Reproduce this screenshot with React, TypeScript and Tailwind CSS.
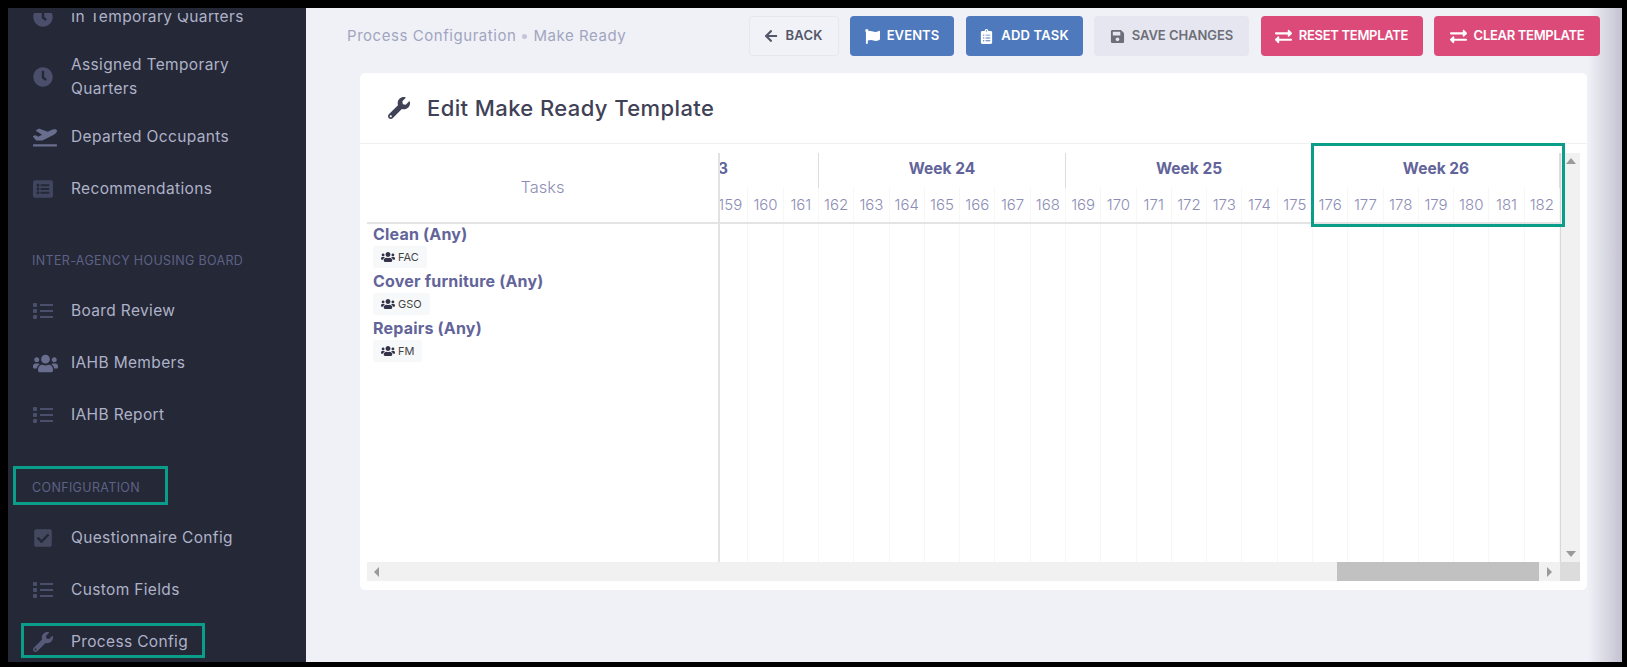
import type { ReactNode } from "react";
import {
  FaArrowLeft,
  FaCheckSquare,
  FaClipboardList,
  FaClock,
  FaExchangeAlt,
  FaFlag,
  FaListAlt,
  FaPlaneDeparture,
  FaSave,
  FaUsers,
  FaWrench,
} from "react-icons/fa";

function ListIcon() {
  return (
    <svg width="20" height="16" viewBox="0 0 20 16" fill="#4b4f6b">
      <rect x="0" y="0" width="4" height="4" rx="1" />
      <rect x="0" y="6" width="4" height="4" rx="1" />
      <rect x="0" y="12" width="4" height="4" rx="1" />
      <rect x="7" y="1" width="13" height="2" />
      <rect x="7" y="7" width="13" height="2" />
      <rect x="7" y="13" width="13" height="2" />
    </svg>
  );
}

function NavItem({ icon, label, tall }: { icon: ReactNode; label: string; tall?: boolean }) {
  return (
    <div className={tall ? "flex h-[68px] items-center pl-[25px]" : "flex h-[52px] items-center pl-[25px]"}>
      <span className="flex w-[38px] shrink-0 items-center text-[#4b4f6b]">{icon}</span>
      <span className="w-[190px] text-[15.5px] leading-[24px] tracking-[0.35px] text-[#aeb2c9]">{label}</span>
    </div>
  );
}

function SideHeading({ label, top }: { label: string; top: string }) {
  return (
    <div className={`${top} pb-[14px] pl-[24px] text-[12.5px] leading-[20px] tracking-[0.35px] text-[#5d6285]`}>
      {label}
    </div>
  );
}

function Sidebar() {
  return (
    <aside className="relative w-[298px] shrink-0 overflow-hidden bg-[#252836]">
      <div className="-mt-[17px]">
        <NavItem icon={<FaClock size={20} />} label="In Temporary Quarters" />
        <NavItem icon={<FaClock size={20} />} label="Assigned Temporary Quarters" tall />
        <NavItem icon={<FaPlaneDeparture size={24} className="text-[#6a6e8e]" />} label="Departed Occupants" />
        <NavItem icon={<FaListAlt size={20} className="text-[#414560]" />} label="Recommendations" />
        <SideHeading label="INTER-AGENCY HOUSING BOARD" top="pt-[36px]" />
        <NavItem icon={<ListIcon />} label="Board Review" />
        <NavItem icon={<FaUsers size={25} className="text-[#6a6e8e]" />} label="IAHB Members" />
        <NavItem icon={<ListIcon />} label="IAHB Report" />
        <SideHeading label="CONFIGURATION" top="pt-[37px]" />
        <NavItem icon={<FaCheckSquare size={20} className="text-[#454960]" />} label="Questionnaire Config" />
        <NavItem icon={<ListIcon />} label="Custom Fields" />
        <NavItem icon={<FaWrench size={20} className="text-[#565a78]" />} label="Process Config" />
      </div>
      {/* the sidebar header sits over the scrolled list */}
      <div className="absolute inset-x-0 top-0 h-[5px] bg-[#252836]" />
    </aside>
  );
}

function ActionButton({ icon, label, tone }: { icon: ReactNode; label: string; tone: string }) {
  return (
    <button className={`flex h-[40px] items-center justify-center gap-[7px] rounded-[4px] text-[13px] font-semibold ${tone}`}>
      {icon}
      {label}
    </button>
  );
}

const weeks = [
  { label: "Week 23", days: [155, 156, 157, 158, 159, 160, 161] },
  { label: "Week 24", days: [162, 163, 164, 165, 166, 167, 168] },
  { label: "Week 25", days: [169, 170, 171, 172, 173, 174, 175] },
  { label: "Week 26", days: [176, 177, 178, 179, 180, 181, 182] },
];

const tasks = [
  { name: "Clean (Any)", group: "FAC" },
  { name: "Cover furniture (Any)", group: "GSO" },
  { name: "Repairs (Any)", group: "FM" },
];

function Timeline() {
  return (
    <div className="flex h-full min-w-0 flex-1 justify-end overflow-hidden">
      {weeks.map((week) => (
        <div key={week.label} className="flex w-[247px] shrink-0 flex-col">
          <div className="flex h-[35px] items-center justify-center border-r border-[#dddddd] pb-[3px] text-[15.5px] font-bold text-[#62649a]">
            {week.label}
          </div>
          <div className="flex h-[36px] border-b-2 border-[#e4e4e4]">
            {week.days.map((day) => (
              <div
                key={day}
                className="flex flex-1 items-center justify-center border-r border-[#f7f7f7] text-[15px] font-light text-[#8c8db5]"
              >
                {day}
              </div>
            ))}
          </div>
          <div className="flex flex-1">
            {week.days.map((day) => (
              <div key={day} className="flex-1 border-r border-[#f7f7f8]" />
            ))}
          </div>
        </div>
      ))}
    </div>
  );
}

function TaskColumn() {
  return (
    <div className="flex h-full w-[353px] shrink-0 flex-col border-r-2 border-[#e2e2e2]">
      <div className="flex h-[71px] shrink-0 items-center justify-center border-b-2 border-[#e4e4e4] text-[16.5px] font-light text-[#8c8db5]">
        Tasks
      </div>
      <div className="-mt-px pl-[6px]">
        {tasks.map((task) => (
          <div key={task.name} className="h-[47px]">
            <div className="h-[23px] text-[16px] font-bold leading-[23px] tracking-[0.2px] text-[#62649a]">{task.name}</div>
            <div className="flex h-[22px] w-fit items-center gap-[3px] rounded-[3px] bg-[#f7f8fa] pl-[8px] pr-[8px] text-[11px] text-[#444444]">
              <FaUsers size={14} className="text-[#33344a]" />
              {task.group}
            </div>
          </div>
        ))}
      </div>
    </div>
  );
}

function Arrow({ points }: { points: string }) {
  return (
    <svg width="10" height="10" viewBox="0 0 10 10" fill="#9a9a9a">
      <polygon points={points} />
    </svg>
  );
}

function TemplateCard() {
  return (
    <section className="ml-[54px] mr-[35px] h-[517px] rounded-[5px] bg-white">
      <div className="flex h-[71px] items-center border-b border-[#f0f0f2] pl-[28px]">
        <FaWrench size={22} className="text-[#3f4156]" />
        <h1 className="ml-[17px] text-[22px] font-medium tracking-[0.4px] text-[#3f4156]">Edit Make Ready Template</h1>
      </div>
      <div className="px-[7px] pt-[9px]">
        <div className="flex h-[409px]">
          <TaskColumn />
          <Timeline />
          <div className="flex w-[20px] shrink-0 flex-col items-center justify-between border-l border-[#d8d8d8] bg-[#f1f1f1] py-[3px]">
            <Arrow points="0,8 10,8 5,2" />
            <Arrow points="0,2 10,2 5,8" />
          </div>
        </div>
        <div className="flex h-[19px]">
          <div className="flex w-[970px] items-center bg-[#f1f1f1] pl-[5px]">
            <Arrow points="7,0 7,10 2,5" />
          </div>
          <div className="w-[202px] bg-[#c1c1c1]" />
          <div className="flex flex-1 items-center bg-[#f1f1f1] pl-[5px]">
            <Arrow points="3,0 3,10 8,5" />
          </div>
          <div className="w-[20px] bg-[#dcdcdc]" />
        </div>
      </div>
    </section>
  );
}

export default function App() {
  return (
    <div className="relative flex h-[667px] w-[1627px] overflow-hidden bg-black pb-[5px] pl-[8px] pr-[5px] pt-[8px] font-[Inter,sans-serif]">
      <Sidebar />
      <main className="relative min-w-0 flex-1 bg-[#f0f1f7]">
        <div className="pointer-events-none absolute inset-y-0 right-0 w-[34px] bg-gradient-to-r from-[#f0f1f7]/0 to-[#c4c2d0]" />
        <header className="relative z-10 flex h-[65px] items-start justify-between pl-[41px] pr-[22px] pt-[8px]">
          <div className="flex h-[40px] items-center text-[15px] tracking-[0.55px] text-[#a1a5bf]">
            Process Configuration
            <span className="mx-[6px] size-[5px] rounded-full bg-[#c3c6d8]" />
            Make Ready
          </div>
          <div className="flex gap-[11.5px]">
            <ActionButton
              icon={<FaArrowLeft size={14} />}
              label="BACK"
              tone="w-[90px] border border-[#e6e7ee] bg-[#f1f2f7] tracking-[0.25px] text-[#54566b]"
            />
            <ActionButton icon={<FaFlag size={15} />} label="EVENTS" tone="w-[104px] bg-[#4e79bd] tracking-[0.1px] text-white" />
            <ActionButton icon={<FaClipboardList size={15} />} label="ADD TASK" tone="w-[117px] bg-[#4e79bd] tracking-[0.2px] text-white" />
            <ActionButton icon={<FaSave size={15} />} label="SAVE CHANGES" tone="w-[155px] bg-[#e5e6ef] tracking-[-0.05px] text-[#6d6e78]" />
            <ActionButton icon={<FaExchangeAlt size={17} />} label="RESET TEMPLATE" tone="w-[162px] bg-[#dc4a7a] tracking-[-0.3px] text-white" />
            <ActionButton icon={<FaExchangeAlt size={17} />} label="CLEAR TEMPLATE" tone="w-[166px] bg-[#dc4a7a] tracking-[-0.3px] text-white" />
          </div>
        </header>
        <TemplateCard />
      </main>

      {/* annotation boxes drawn over the screenshot */}
      <div className="absolute left-[13px] top-[466px] h-[39px] w-[155px] border-[3px] border-[#0a9d8a]" />
      <div className="absolute left-[21px] top-[623px] h-[35px] w-[184px] border-[3px] border-[#0a9d8a]" />
      <div className="absolute left-[1311px] top-[143px] h-[84px] w-[254px] border-[3px] border-[#0a9d8a]" />
    </div>
  );
}
